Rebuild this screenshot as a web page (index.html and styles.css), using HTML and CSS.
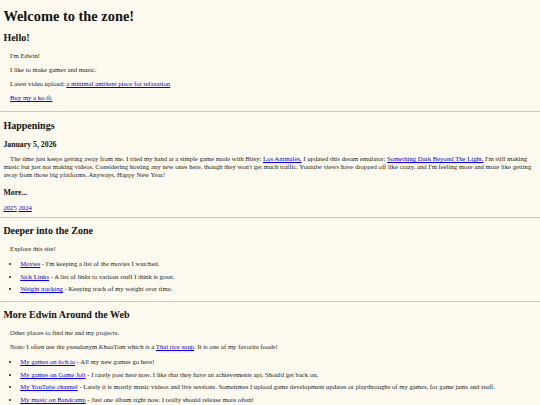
FILE: index.html
```html
<!DOCTYPE html>
<html lang="en">
<head>
<meta charset="utf-8">
<title>Welcome to the zone!</title>
<link rel="stylesheet" href="styles.css">
</head>
<body class="page">
<h1 class="title">Welcome to the zone!</h1>

<section class="section">
  <h2 class="heading">Hello!</h2>
  <p class="text indent">I'm Edwin!</p>
  <p class="text indent">I like to make games and music.</p>
  <p class="text indent">Latest video upload: <a class="link" href="#">a minimal ambient piece for relaxation</a></p>
  <p class="text indent"><a class="link" href="#">Buy my a ko-fi.</a></p>
</section>

<hr class="rule rule-first">

<section class="section">
  <h2 class="heading">Happenings</h2>
  <h3 class="subheading">January 5, 2026</h3>
  <p class="text post">The time just keeps getting away from me. I tried my hand at a simple game made with Bitsy: <a class="link" href="#">Los Animales.</a> I updated this dream emulator: <a class="link" href="#">Something Dark Beyond The Light.</a> I'm still making music but just not making videos. Considering hosting any new ones here, though they won't get much traffic. Youtube views have dropped off like crazy, and I'm feeling more and more like getting away from those big platforms. Anyways, Happy New Year!</p>
  <h3 class="subheading more">More...</h3>
  <p class="text years"><a class="link" href="#">2025</a> <a class="link" href="#">2024</a></p>
</section>

<hr class="rule rule-second">

<section class="section">
  <h2 class="heading">Deeper into the Zone</h2>
  <p class="text indent">Explore this site!</p>
  <ul class="list">
    <li class="item"><a class="link" href="#">Movies</a> - I'm keeping a list of the movies I watched.</li>
    <li class="item"><a class="link" href="#">Sick Links</a> - A list of links to various stuff I think is great.</li>
    <li class="item"><a class="link" href="#">Weight tracking</a> - Keeping track of my weight over time.</li>
  </ul>
</section>

<hr class="rule rule-third">

<section class="section">
  <h2 class="heading">More Edwin Around the Web</h2>
  <p class="text indent">Other places to find me and my projects.</p>
  <p class="text indent">Note: I often use the pseudonym KhaoTom which is a <a class="link" href="#">Thai rice soup</a>. It is one of my favorite foods!</p>
  <ul class="list">
    <li class="item"><a class="link" href="#">My games on itch.io</a> - All my new games go here!</li>
    <li class="item"><a class="link" href="#">My games on Game Jolt</a> - I rarely post here now. I like that they have an achievements api. Should get back on.</li>
    <li class="item"><a class="link" href="#">My YouTube channel</a> - Lately it is mostly music videos and live sessions. Sometimes I upload game development updates or playthroughs of my games, for game jams and stuff.</li>
    <li class="item"><a class="link" href="#">My music on Bandcamp</a> - Just one album right now. I really should release more often!</li>
  </ul>
</section>
</body>
</html>
```

FILE: styles.css
```css
html {
  background: #fffaf0;
}

.page {
  margin: 0;
  padding: 0 3.4px;
  background: #fffaf0;
  color: #222;
  font-family: "Liberation Serif", "Times New Roman", serif;
  font-size: 6.7px;
  line-height: 8px;
}

.title {
  font-size: 14.4px;
  line-height: 17px;
  margin: 7.8px 0 7.7px;
  color: #111;
}

.section {
  display: flow-root;
}

.heading {
  font-size: 10px;
  line-height: 11.5px;
  margin: 0 0 8.5px;
  color: #111;
}

.subheading {
  font-size: 7.8px;
  line-height: 9px;
  margin: 8px 0 6.5px;
  color: #111;
}

.subheading.more {
  margin: 8.5px 0 7.5px;
}

.text {
  margin: 0 0 6px;
}

.indent {
  margin-left: 6.7px;
}

.post {
  text-indent: 6.7px;
}

.years {
  margin: 0;
}

.link {
  color: #0000ee;
}

.list {
  margin: 7px 0 0;
  padding-left: 16.8px;
}

.item {
  margin-bottom: 4.5px;
}

.rule {
  border: 0;
  border-top: 1px solid #c8c8c8;
  margin: 0 -3.4px;
  height: 0;
}

.rule-first {
  margin-top: 2.5px;
  margin-bottom: 8px;
}

.rule-second {
  margin-top: 4.5px;
  margin-bottom: 7.5px;
}

.rule-third {
  margin-top: 3px;
  margin-bottom: 7.5px;
}
```
